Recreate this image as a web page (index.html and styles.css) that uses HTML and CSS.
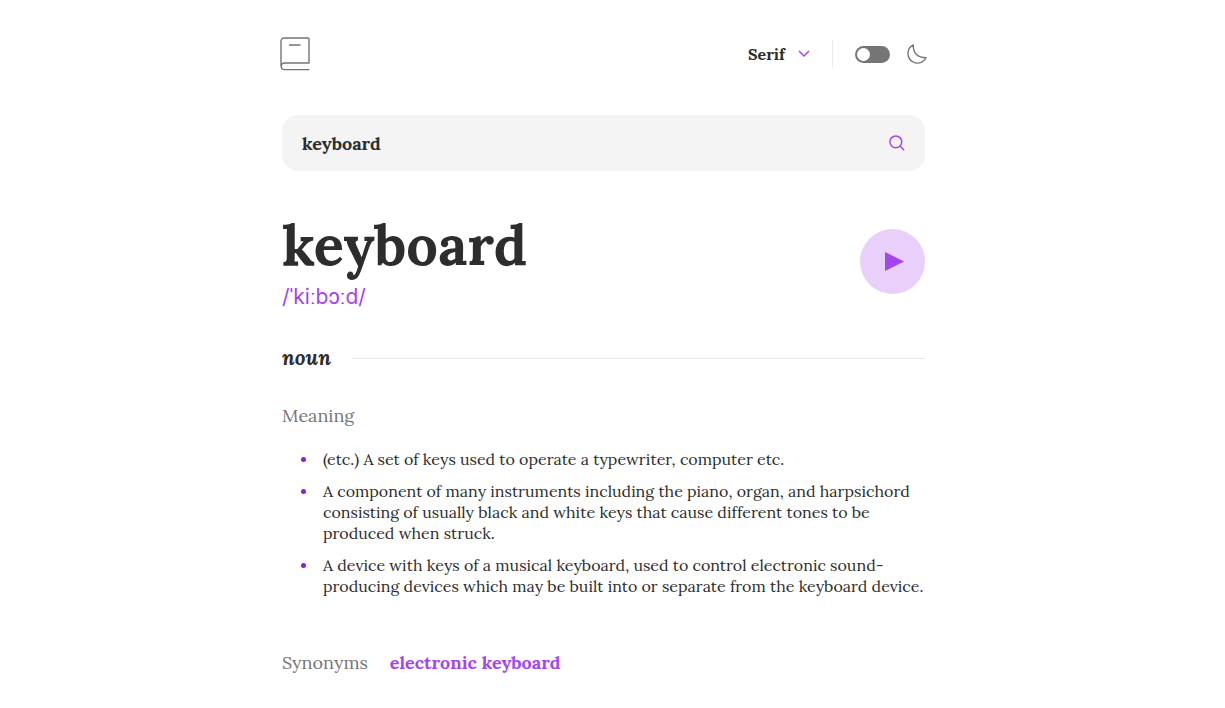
FILE: index.html
```html
<!DOCTYPE html>
<html lang="en">
<head>
<meta charset="utf-8">
<meta name="viewport" content="width=device-width, initial-scale=1">
<title>Dictionary</title>
<link rel="stylesheet" href="styles.css">
</head>
<body>
<div class="page">
  <header class="header">
    <a class="logo" href="#" aria-label="Dictionary home">
      <svg width="30" height="34" viewBox="0 0 30 34" fill="none" stroke="#757575" stroke-width="1.4" stroke-linecap="round" stroke-linejoin="round"><path d="M1 29V4a3 3 0 0 1 3-3h24a1 1 0 0 1 1 1v24H4.500a3.300 3.300 0 0 0 0 6.600H29M1 29.300a3.300 3.300 0 0 1 3.500-3.300M9.500 8h10.500"/></svg>
    </a>
    <div class="controls">
      <div class="font-picker">
        <select class="font-select" aria-label="Font"><option>Serif</option><option>Sans</option><option>Mono</option></select>
        <svg class="chevron" width="12" height="8" viewBox="0 0 12 8" fill="none" stroke="#a445ed" stroke-width="1.5"><path d="m1 1 5 5 5-5"/></svg>
      </div>
      <label class="theme">
        <input class="switch" type="checkbox" role="switch" aria-label="Dark mode">
        <svg width="20" height="20" viewBox="0 0 22 22" fill="none" stroke="#757575" stroke-width="1.5" stroke-linecap="round" stroke-linejoin="round"><path d="M1 10.449a10.544 10.544 0 0 0 19.993 4.686C11.544 15.135 6.858 10.448 6.858 1A10.545 10.545 0 0 0 1 10.449Z"/></svg>
      </label>
    </div>
  </header>
  <form class="search">
    <input class="search-input" type="text" value="keyboard" aria-label="Search for a word">
    <button class="search-button" type="button" aria-label="Search">
      <svg width="16" height="16" viewBox="0 0 18 18" fill="none" stroke="#a445ed" stroke-width="1.7" stroke-linecap="round"><path d="m12.663 12.663 3.887 3.887M1 7.664a6.665 6.665 0 1 0 13.330 0 6.665 6.665 0 0 0-13.330 0Z"/></svg>
    </button>
  </form>
  <main>
    <section class="word">
      <div><h1 class="word-title">keyboard</h1><p class="phonetic">/ˈkiːbɔːd/</p></div>
      <button class="play" type="button" aria-label="Play pronunciation"><svg width="19" height="19" viewBox="0 0 19 19"><path fill="#a445ed" d="M0 0v19l19-9.500z"/></svg></button>
    </section>
    <section>
      <h2 class="part">noun</h2>
      <h3 class="label">Meaning</h3>
      <ul class="meanings">
        <li>(etc.) A set of keys used to operate a typewriter, computer etc.</li>
        <li>A component of many instruments including the piano, organ, and harpsichord consisting of usually black and white keys that cause different tones to be produced when struck.</li>
        <li>A device with keys of a musical keyboard, used to control electronic sound-producing devices which may be built into or separate from the keyboard device.</li>
      </ul>
      <div class="synonyms"><h3 class="label">Synonyms</h3><a class="synonym" href="#">electronic keyboard</a></div>
    </section>
  </main>
</div>
</body>
</html>
```
FILE: styles.css
```css
* { box-sizing: border-box; margin: 0; padding: 0; }
body { padding: 0 18px 0 0; background: #fff; color: #2d2d2d; font-family: Lora, "Noto Serif", "Liberation Serif", serif; font-size: 16px; }
button, input, select { font: inherit; color: inherit; border: 0; background: none; }
button { cursor: pointer; }
svg { display: block; }
.page { width: min(100% - 32px, 643px); margin: 0 auto; padding-top: 37px; }
.header { display: flex; justify-content: space-between; align-items: center; margin: 0 -2px; }
.controls { display: flex; align-items: center; }
.font-picker { display: grid; align-items: center; width: 85px; height: 28px; padding-right: 22px; border-right: 1px solid #e9e9e9; }
.font-select { grid-area: 1 / 1; appearance: none; font-weight: 700; }
.chevron { grid-area: 1 / 1; justify-self: end; pointer-events: none; }
.theme { display: flex; align-items: center; gap: 17px; padding-left: 22px; }
.switch { appearance: none; width: 35px; height: 17px; padding: 2px; border-radius: 9px; background: #757575; }
.switch::before { content: ""; display: block; width: 13px; height: 13px; border-radius: 50%; background: #fff; }
.switch:checked::before { margin-left: auto; }
.search { display: flex; align-items: center; height: 56px; margin-top: 44px; padding: 0 20px; border-radius: 16px; background: #f4f4f4; }
.search-input { flex: 1; min-width: 0; font-weight: 700; font-size: 18px; outline: 0; }
.word { display: flex; justify-content: space-between; align-items: center; margin-top: 38px; }
.word-title { font-size: 56px; line-height: 72px; }
.phonetic { font-family: Inter, sans-serif; font-size: 21px; line-height: 32px; color: #a445ed; }
.play { display: grid; place-items: center; width: 65px; height: 65px; padding-left: 4px; border-radius: 50%; background: #e8d0fa; }
.part { display: flex; align-items: center; gap: 21px; margin-top: 31px; font-size: 21px; line-height: 28px; font-style: italic; }
.part::after { content: ""; flex: 1; height: 1px; background: #e9e9e9; }
.label { color: #757575; font-size: 18px; line-height: 24px; font-weight: 400; }
.part + .label { margin-top: 32px; }
.meanings { display: grid; gap: 11px; margin-top: 21px; padding-left: 41px; line-height: 21px; list-style: none; }
.meanings li::before { content: ""; float: left; width: 5px; height: 5px; margin: 8px 0 0 -22px; border-radius: 50%; background: #8f19e8; }
.synonyms { display: flex; gap: 22px; margin-top: 54px; padding-bottom: 24px; }
.synonym { color: #a445ed; font-size: 18px; line-height: 24px; font-weight: 700; text-decoration: none; }
```
